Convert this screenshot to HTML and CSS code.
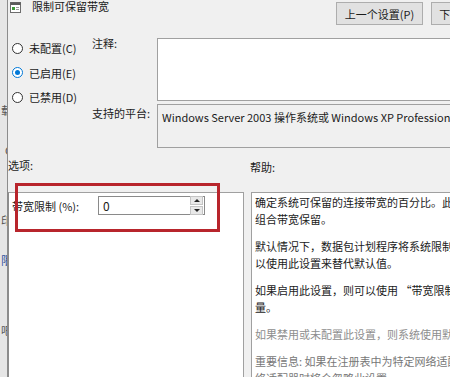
FILE: index.html
```html
<!DOCTYPE html>
<html lang="zh-CN">
<head>
    <meta charset="UTF-8">
    <meta name="viewport" content="width=device-width, initial-scale=1.0">
    <title>限制可保留带宽</title>
    <link rel="stylesheet" href="styles.css">
</head>
<body>

    <div class="screen">
        <div class="behind">
            <span>载</span>
            <span>C</span>
            <span class="gap">印</span>
            <span class="blue">限</span>
            <span class="gap">吧</span>
        </div>

        <div class="dialog">
            <div class="header">
                <div class="title">
                    <svg class="app-icon" viewBox="0 0 11 11">
                        <rect x="0.5" y="0.5" width="10" height="10" fill="#fff" stroke="#6d6d6d"/>
                        <rect x="0.5" y="0.5" width="10" height="2.5" fill="#5b5b5b"/>
                        <rect x="2" y="5" width="3" height="3" fill="#3d9a3a"/>
                        <rect x="6" y="5" width="3" height="1" fill="#9a9a9a"/>
                        <rect x="6" y="7" width="3" height="1" fill="#9a9a9a"/>
                    </svg>
                    <span>限制可保留带宽</span>
                </div>
                <div class="nav-buttons">
                    <button class="btn">上一个设置(P)</button>
                    <button class="btn">下一个设置(N)</button>
                </div>
            </div>

            <div class="config">
                <div class="states">
                    <label class="radio"><span class="dot"></span>未配置(C)</label>
                    <label class="radio checked"><span class="dot"></span>已启用(E)</label>
                    <label class="radio"><span class="dot"></span>已禁用(D)</label>
                </div>
                <div class="field-label">注释:</div>
                <div class="comment-box"></div>
                <div class="field-label platform-label">支持的平台:</div>
                <div class="platform-box">Windows Server 2003 操作系统或 Windows XP Professional</div>
            </div>

            <div class="section-labels">
                <span class="options-label">选项:</span>
                <span class="help-label">帮助:</span>
            </div>

            <div class="panels">
                <div class="options-panel">
                    <div class="option-row">
                        <span class="option-name">带宽限制 (%):</span>
                        <div class="spinner">
                            <span class="spinner-value">0</span>
                            <div class="spin-buttons">
                                <span class="spin up"></span>
                                <span class="spin down"></span>
                            </div>
                        </div>
                    </div>
                </div>
                <div class="help-panel">
                    <p>确定系统可保留的连接带宽的百分比。此值限制所有运行在系统上的程序的<br>组合带宽保留。</p>
                    <p>默认情况下，数据包计划程序将系统限制在连接带宽的 80%，但是你可<br>以使用此设置来替代默认值。</p>
                    <p>如果启用此设置，则可以使用 “带宽限制” 框来调整系统可保留的带宽<br>量。</p>
                    <p class="faded">如果禁用或未配置此设置，则系统使用默认值 (即连接带宽的 80%)。</p>
                    <p class="faded dim">重要信息: 如果在注册表中为特定网络适配器设置了带宽限制，则配置该网<br>络适配器时将会忽略此设置。</p>
                </div>
            </div>

            <div class="highlight"></div>
        </div>
    </div>

</body>
</html>
```

FILE: styles.css
```css
:root {
    --cor-fundo: #f0f0f0;
    --cor-borda: #a0a0a0;
    --cor-texto: #1b1b1b;
    --cor-destaque: #b8252c;
}

body {
    margin: 0;
    background-color: var(--cor-fundo);
    font-family: "Noto Sans CJK SC", "Noto Sans", sans-serif;
    font-size: 11px;
    color: var(--cor-texto);
}

.screen {
    display: flex;
    width: 450px;
    height: 377px;
    overflow: hidden;
}

/* janela de trás, cortada na borda esquerda */
.behind {
    flex: 0 0 7px;
    border-right: 1px solid #8c8c8c;
    background-color: #e6e6e6;
    overflow: hidden;
    display: flex;
    flex-direction: column;
    align-items: flex-end;
    padding-top: 104px;
    gap: 28px;
    color: #555;
    font-size: 11px;
    line-height: 12px;
}
.behind span { margin-right: -5px; }
.behind .gap { margin-top: 30px; }
.behind .blue { color: #2a4f9a; }

.dialog {
    flex: 0 0 520px;
    width: 520px;
    min-width: 0;
    overflow: hidden;
    position: relative;
    background-color: var(--cor-fundo);
}

.header {
    display: flex;
    justify-content: space-between;
    align-items: flex-start;
    height: 38px;
    padding-right: 10px;
}

.title {
    display: flex;
    align-items: center;
    gap: 11px;
    padding-left: 2px;
    line-height: 13px;
    font-size: 11px;
}
.app-icon { width: 11px; height: 11px; margin-top: 1px; }

.nav-buttons { display: flex; gap: 8px; margin-top: 2px; }

.btn {
    font-family: inherit;
    font-size: 11px;
    color: var(--cor-texto);
    width: 87px;
    height: 23px;
    padding: 0;
    background-color: #e1e1e1;
    border: 1px solid #adadad;
}

.config {
    display: grid;
    grid-template-columns: 80px 65px minmax(0, 1fr);
    grid-template-rows: 63px 44px;
    row-gap: 3px;
    padding-left: 4px;
    padding-right: 10px;
}

.states {
    grid-row: 1 / span 2;
    display: flex;
    flex-direction: column;
    margin-top: -2px;
}

.radio {
    display: flex;
    align-items: center;
    gap: 6px;
    height: 24.5px;
}

.dot {
    width: 9px;
    height: 9px;
    border: 1px solid #333;
    border-radius: 50%;
    background-color: #fff;
    display: flex;
    align-items: center;
    justify-content: center;
}
.radio.checked .dot { border-color: #0078d7; }
.radio.checked .dot::after {
    content: "";
    width: 5px;
    height: 5px;
    border-radius: 50%;
    background-color: #0078d7;
}

.field-label { line-height: 14px; margin-top: -2px; }
.field-label.platform-label { margin-top: 2px; }

.comment-box {
    background-color: #fff;
    border: 1px solid var(--cor-borda);
}

.platform-box {
    border: 1px solid var(--cor-borda);
    padding: 5px 4px;
    line-height: 14px;
    white-space: nowrap;
    overflow: hidden;
}

.section-labels {
    display: flex;
    margin-top: 10px;
    line-height: 14px;
}
.options-label { width: 242px; }
.help-label { padding-top: 2px; }

.panels {
    display: flex;
    gap: 7px;
    margin-top: 18px;
    height: 200px;
}

.options-panel {
    flex: 0 0 234px;
    background-color: #fff;
    border: 1px solid var(--cor-borda);
    border-left-color: #8c8c8c;
    padding-top: 3px;
}

.option-row { display: flex; align-items: center; padding-left: 3px; }
.option-name { width: 86px; }

.spinner {
    display: flex;
    align-items: center;
    justify-content: space-between;
    width: 105px;
    height: 17px;
    border: 1px solid #8a8a8a;
    background-color: #fff;
}
.spinner-value { padding-left: 4px; font-size: 12px; }

.spin-buttons { display: flex; flex-direction: column; gap: 1px; margin-right: 1px; }
.spin {
    width: 11px;
    height: 7px;
    background-color: #e8e8e8;
    border: 1px solid #c4c4c4;
    display: flex;
    align-items: center;
    justify-content: center;
}
.spin.up::after { content: ""; border: 3px solid transparent; border-bottom: 3px solid #222; border-top: 0; }
.spin.down::after { content: ""; border: 3px solid transparent; border-top: 3px solid #222; border-bottom: 0; }

.help-panel {
    flex: 1;
    min-width: 0;
    background-color: #fff;
    border: 1px solid var(--cor-borda);
    padding: 1px 3px;
    line-height: 17px;
    white-space: nowrap;
    overflow: hidden;
}
.help-panel p { margin: 0 0 10px 0; }
.help-panel .faded { color: #8e8e8e; }
.help-panel .dim { color: #777; }

/* moldura vermelha de anotação por cima do formulário */
.highlight {
    position: absolute;
    left: 7px;
    top: 183px;
    width: 199px;
    height: 43px;
    border: 3px solid var(--cor-destaque);
}
```
